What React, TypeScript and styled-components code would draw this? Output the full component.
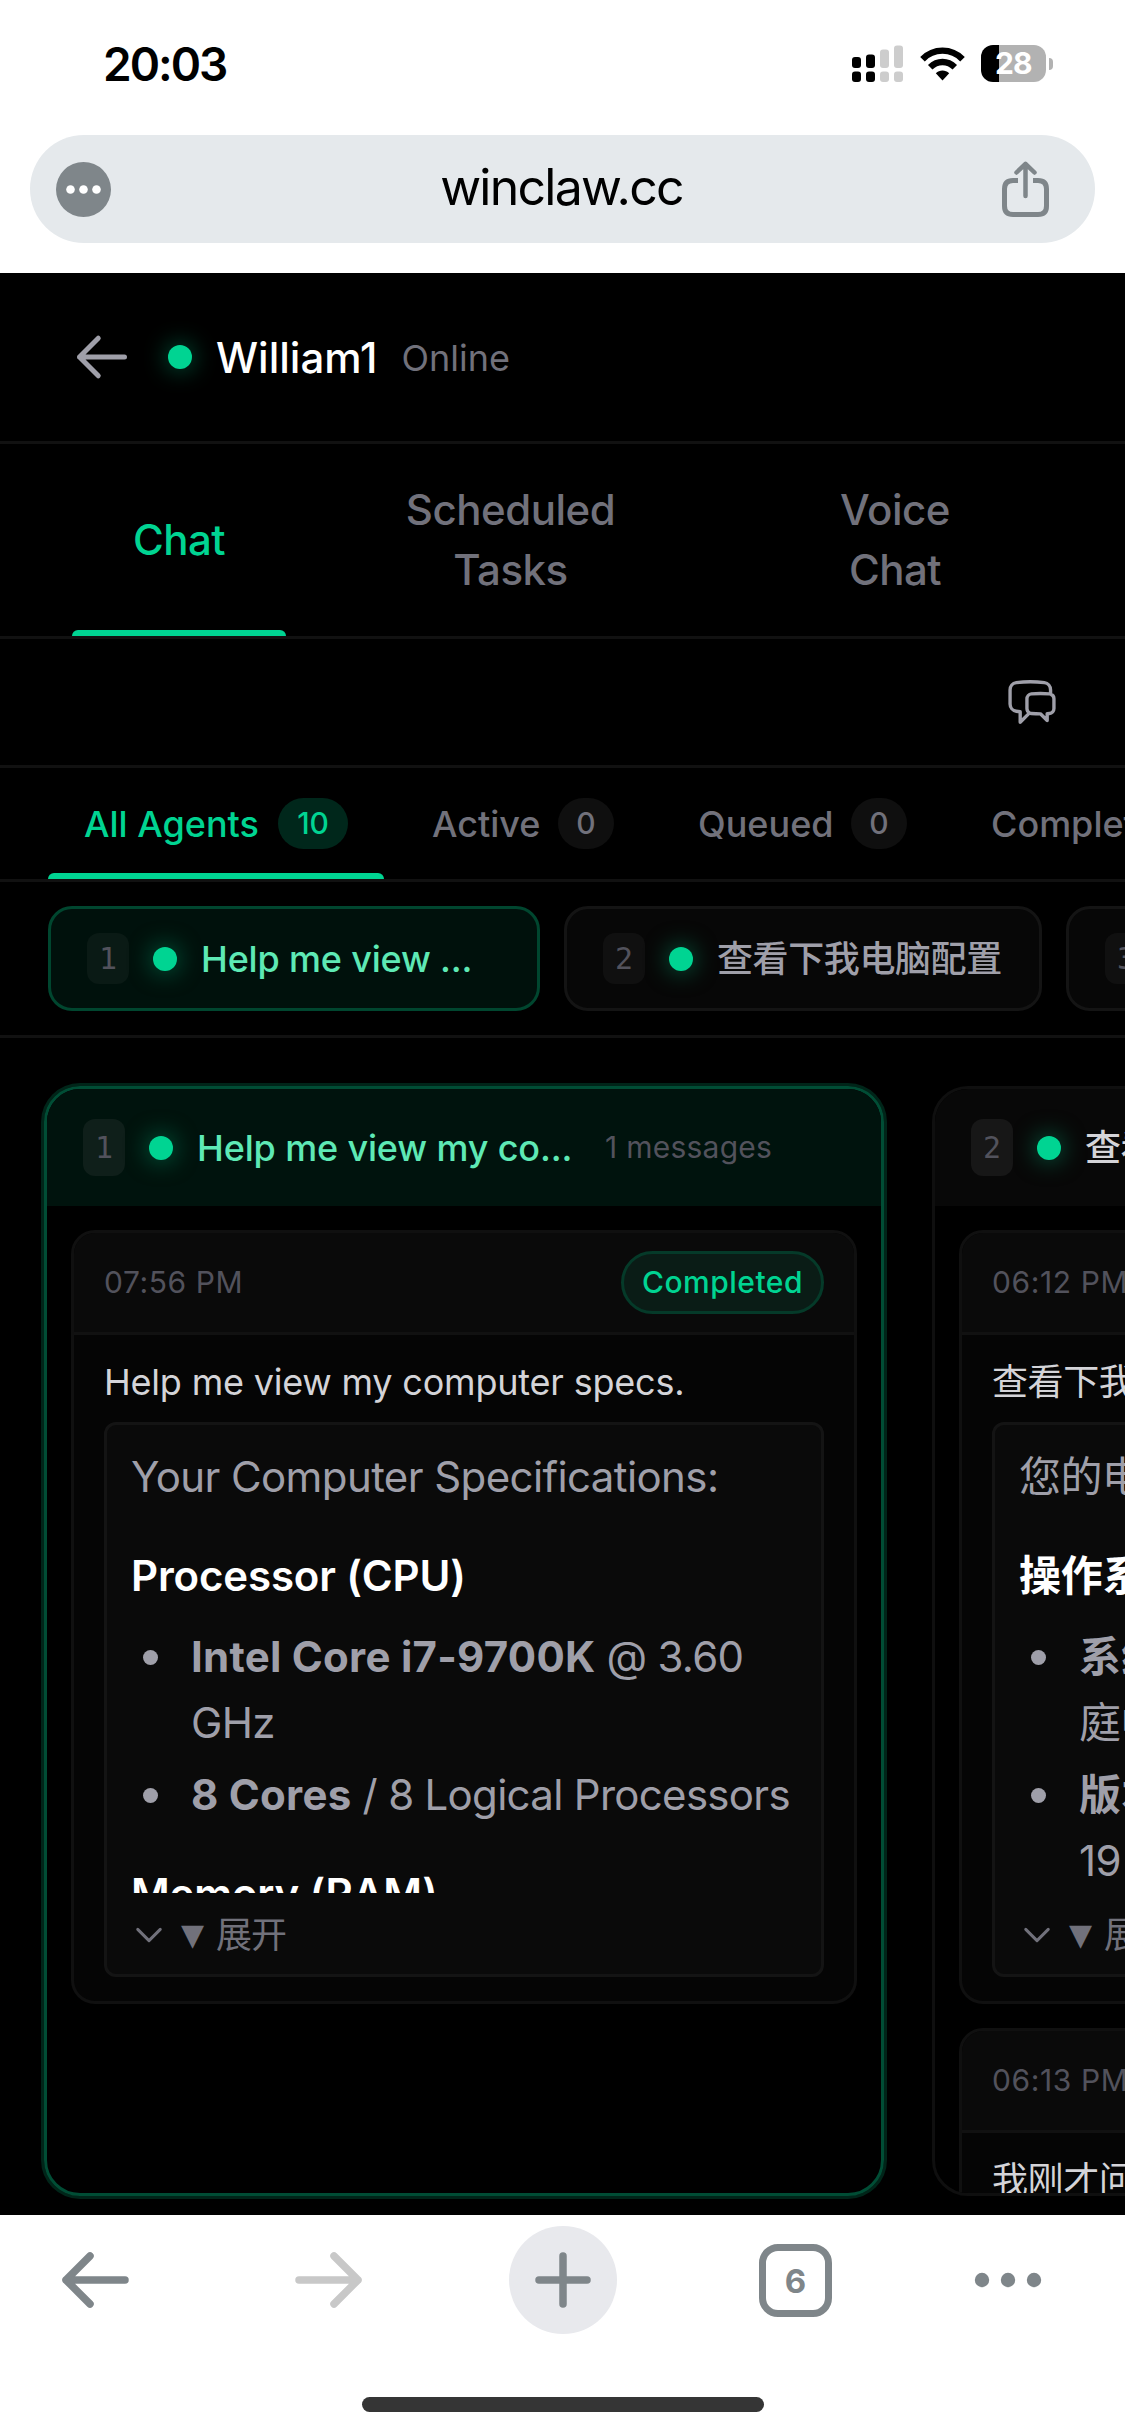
import React from 'react';
import styled, { createGlobalStyle, css } from 'styled-components';

const c = {
  green: '#00d492',
  mint: '#5ee9b5',
  muted: '#71717b',
  dim: '#52525c',
  soft: '#9f9fa9',
  text: '#d4d4d8',
  line: '#111111',
  chrome: '#7f868a',
};

const GlobalStyle = createGlobalStyle`
  *, *::before, *::after { box-sizing: border-box; }
  body {
    margin: 0;
    background: #fff;
    font-family: Inter, "Noto Sans CJK SC", sans-serif;
    -webkit-font-smoothing: antialiased;
  }
  svg { display: block; flex: none; }
`;

const Phone = styled.div`
  width: 1125px;
  height: 2436px;
  display: flex;
  flex-direction: column;
  overflow: hidden;
  background: #fff;
`;

/* ---------- status bar and address bar ---------- */

const StatusBar = styled.div`
  height: 135px;
  padding: 0 72px 8px 103px;
  display: flex;
  align-items: center;
  justify-content: space-between;
`;

const Clock = styled.div`
  font-size: 46px;
  font-weight: 600;
  line-height: 56px;
  letter-spacing: -2px;
  color: #000;
`;

const StatusIcons = styled.div`
  display: flex;
  align-items: center;
  width: 201px;
`;

const WifiSlot = styled.div`
  margin: 0 16px 0 17px;
`;

const Battery = styled.div`
  width: 66px;
  height: 37px;
  border-radius: 12px;
  background: linear-gradient(90deg, #000 18.5px, #b2b2b2 18.5px);
  color: #fff;
  font-size: 30px;
  font-weight: 700;
  line-height: 37px;
  letter-spacing: -0.8px;
  padding-left: 14px;
`;

const BatteryTip = styled.div`
  width: 4px;
  height: 12px;
  margin-left: 3px;
  border-radius: 0 4px 4px 0;
  background: #b2b2b2;
`;

const AddressArea = styled.div`
  height: 138px;
  padding: 0 30px;
`;

const AddressBar = styled.div`
  height: 108px;
  border-radius: 54px;
  background: #e5e9ec;
  display: flex;
  align-items: center;
  justify-content: space-between;
  padding: 0 45px 0 26px;
`;

const Url = styled.div`
  font-size: 50px;
  line-height: 60px;
  letter-spacing: -1.75px;
  padding: 0 0 5px 11px;
  color: #000;
`;

/* ---------- page ---------- */

const Page = styled.main`
  height: 1942px;
  background: #000;
  display: flex;
  flex-direction: column;
  overflow: hidden;
`;

const PageHeader = styled.header`
  height: 171px;
  flex: none;
  padding: 0 72px;
  display: flex;
  align-items: center;
  border-bottom: 3px solid ${c.line};
`;

const StatusDot = styled.span`
  width: 24px;
  height: 24px;
  flex: none;
  border-radius: 50%;
  background: ${c.green};
  box-shadow: 0 0 24px rgba(0, 212, 146, 0.5);
`;

const UserName = styled.h1`
  margin: 0 24px;
  padding-top: 1px;
  font-size: 42px;
  font-weight: 500;
  line-height: 60px;
  color: #fff;
`;

const Presence = styled.span`
  padding-top: 2px;
  font-size: 36px;
  line-height: 48px;
  color: ${c.muted};
`;

const HeaderDot = styled(StatusDot)`
  margin-left: 36px;
`;

const Tabs = styled.nav`
  height: 195px;
  flex: none;
  display: flex;
  padding-left: 72px;
  border-bottom: 3px solid ${c.line};
`;

const underline = css`
  &::after {
    content: '';
    position: absolute;
    left: 0;
    right: 0;
    bottom: 0;
    height: 6px;
    border-radius: 6px 6px 0 0;
    background: ${c.green};
  }
`;

const Tab = styled.button<{ $width: number; $active?: boolean }>`
  position: relative;
  width: ${p => p.$width}px;
  border: 0;
  padding: 0 60px;
  background: none;
  font: 500 42px/60px Inter, "Noto Sans CJK SC", sans-serif;
  letter-spacing: -0.5px;
  text-align: center;
  color: ${p => (p.$active ? c.green : c.muted)};
  ${p => p.$active && underline}
`;

const Toolbar = styled.div`
  height: 129px;
  flex: none;
  display: flex;
  align-items: center;
  justify-content: flex-end;
  padding-right: 66px;
  border-bottom: 3px solid ${c.line};
`;

const FilterBar = styled.nav`
  height: 114px;
  flex: none;
  display: flex;
  gap: 12px;
  padding-left: 48px;
  border-bottom: 3px solid ${c.line};
`;

const Filter = styled.button<{ $width: number; $active?: boolean }>`
  position: relative;
  flex: none;
  width: ${p => p.$width}px;
  display: flex;
  align-items: center;
  justify-content: space-between;
  border: 0;
  padding: 0 36px;
  background: none;
  font: 500 36px/48px Inter, "Noto Sans CJK SC", sans-serif;
  color: ${p => (p.$active ? c.green : c.muted)};
  ${p => p.$active && underline}
`;

const CountBadge = styled.span<{ $active?: boolean }>`
  min-width: 56px;
  height: 51px;
  padding: 0 ${p => (p.$active ? 19 : 18)}px;
  border-radius: 26px;
  display: flex;
  align-items: center;
  justify-content: center;
  font-size: 30px;
  line-height: 45px;
  background: ${p => (p.$active ? '#00271b' : '#0f0f0f')};
`;

const ChipBar = styled.div`
  height: 156px;
  flex: none;
  display: flex;
  align-items: center;
  gap: 24px;
  padding-left: 48px;
  border-bottom: 3px solid ${c.line};
`;

const Chip = styled.div<{ $width: number; $active?: boolean }>`
  flex: none;
  width: ${p => p.$width}px;
  height: 105px;
  padding-left: 36px;
  display: flex;
  align-items: center;
  gap: 24px;
  border: 3px solid ${p => (p.$active ? '#00462f' : '#141414')};
  border-radius: 24px;
  background: ${p => (p.$active ? '#00110c' : '#070707')};
  font-size: 36px;
  font-weight: 500;
  line-height: 54px;
  letter-spacing: -0.18px;
  white-space: nowrap;
  color: ${p => (p.$active ? c.mint : c.soft)};
`;

const Han = styled.span`
  letter-spacing: -0.4px;
`;

const Index = styled.span<{ $tall?: boolean; $tint: string }>`
  width: 42px;
  height: ${p => (p.$tall ? 57 : 51)}px;
  flex: none;
  border-radius: 12px;
  display: flex;
  align-items: center;
  justify-content: center;
  background: ${p => p.$tint};
  font: 400 30px/45px "DejaVu Sans Mono", monospace;
  color: ${c.dim};
`;

const Board = styled.section`
  flex: 1;
  min-height: 0;
  display: flex;
  gap: 48px;
  padding: 48px 0 19px 44px;
`;

const Column = styled.article<{ $active?: boolean }>`
  width: 840px;
  flex: none;
  display: flex;
  flex-direction: column;
  overflow: hidden;
  border: 3px solid ${p => (p.$active ? '#004d35' : '#0f0f0f')};
  border-radius: 36px;
  box-shadow: ${p => (p.$active ? '0 0 0 3px #002519' : 'none')};
`;

const ColumnHeader = styled.header<{ $active?: boolean }>`
  height: 117px;
  flex: none;
  padding-left: 36px;
  display: flex;
  align-items: center;
  gap: 24px;
  background: ${p => (p.$active ? '#00130d' : '#080808')};
`;

const ColumnTitle = styled.h2<{ $active?: boolean }>`
  margin: 0;
  width: 384px;
  font-size: 36px;
  font-weight: 500;
  line-height: 54px;
  letter-spacing: -0.15px;
  white-space: nowrap;
  color: ${p => (p.$active ? c.mint : c.text)};
`;

const MessageCount = styled.span`
  font-size: 30px;
  line-height: 45px;
  letter-spacing: 0.25px;
  color: ${c.dim};
`;

const ColumnBody = styled.div`
  padding: 24px;
  display: flex;
  flex-direction: column;
  gap: 24px;
`;

const Message = styled.section`
  flex: none;
  border: 3px solid #101010;
  border-radius: 24px;
  overflow: hidden;
  background: #050505;
`;

const MessageHeader = styled.header`
  height: 102px;
  padding: 0 30px;
  display: flex;
  align-items: center;
  justify-content: space-between;
  background: #0a0a0a;
  border-bottom: 3px solid #111;
`;

const Time = styled.time`
  font-size: 30px;
  line-height: 45px;
  letter-spacing: 0.6px;
  color: ${c.dim};
`;

const DonePill = styled.span`
  height: 63px;
  width: 203px;
  border: 3px solid #053a29;
  border-radius: 32px;
  background: #0a1c16;
  font-size: 30px;
  font-weight: 500;
  line-height: 57px;
  letter-spacing: 0.5px;
  text-align: center;
  color: ${c.green};
`;

const MessageBody = styled.div`
  padding: 24px 30px;
`;

const Query = styled.p`
  margin: 0 0 17px;
  padding-top: 1px;
  font-size: 36px;
  line-height: 45px;
  letter-spacing: -0.2px;
  white-space: nowrap;
  color: ${c.text};
`;

const Answer = styled.div`
  height: 555px;
  border: 3px solid #141414;
  border-radius: 12px;
  background: #0a0a0a;
  padding: 18px 24px 0;
`;

const Clip = styled.div`
  height: 450px;
  padding-top: 1px;
  overflow: hidden;
  font-size: 42px;
  line-height: 66px;
  letter-spacing: -0.7px;
  white-space: nowrap;
  color: ${c.soft};
`;

const Lead = styled.p`
  margin: 0;
  letter-spacing: -0.6px;
`;

const Section = styled.h3`
  margin: 33px 0 15px;
  font-size: 42px;
  font-weight: 600;
  letter-spacing: -0.15px;
  color: #fff;
`;

const Specs = styled.ul`
  margin: 0;
  padding: 0;
  list-style: none;
  display: flex;
  flex-direction: column;
  gap: 6px;
`;

const Spec = styled.li`
  display: flex;
  gap: 33px;
  padding-left: 12px;

  &::before {
    content: '';
    width: 15px;
    height: 15px;
    flex: none;
    margin-top: 26px;
    border-radius: 50%;
    background: ${c.soft};
  }
`;

const Strong = styled.strong`
  font-weight: 700;
  letter-spacing: 0.25px;
`;

const Expand = styled.button`
  margin-top: 18px;
  height: 48px;
  border: 0;
  padding: 0;
  background: none;
  display: flex;
  align-items: center;
  font: 400 36px/48px Inter, "Noto Sans CJK SC", sans-serif;
  letter-spacing: -0.9px;
  color: ${c.muted};
`;

const Triangle = styled.span`
  width: 35px;
  margin-left: 14px;
  text-align: left;
  font: 30px/48px "DejaVu Sans", sans-serif;
`;

/* ---------- browser toolbar ---------- */

const BrowserBar = styled.footer`
  flex: 1;
  display: flex;
  flex-direction: column;
  align-items: center;
  justify-content: space-between;
  padding: 11px 0 24px;
`;

const BrowserActions = styled.div`
  width: 1125px;
  height: 108px;
  display: grid;
  grid-template-columns: 191px 275px 194px 271px 153px;
  align-items: center;
  justify-items: center;
`;

const NewTab = styled.div`
  width: 108px;
  height: 108px;
  border-radius: 50%;
  background: #e8e9ed;
  display: grid;
  place-items: center;
`;

const TabCount = styled.div`
  width: 73px;
  height: 73px;
  border: 7px solid ${c.chrome};
  border-radius: 19px;
  font-size: 33px;
  font-weight: 700;
  line-height: 61px;
  text-align: center;
  color: ${c.chrome};
`;

const HomeIndicator = styled.div`
  width: 402px;
  height: 15px;
  border-radius: 8px;
  background: #353535;
`;

/* ---------- icons ---------- */

const SignalIcon = () => (
  <svg width="51" height="37" viewBox="0 0 51 37">
    <g fill="#000">
      <rect x="0" y="12" width="9" height="11" rx="3" />
      <rect x="14" y="9.500" width="9" height="13.500" rx="3" />
      <rect x="0" y="26.500" width="9" height="10.500" rx="3" />
      <rect x="14" y="26.500" width="9" height="10.500" rx="3" />
    </g>
    <g fill="#cdcdcd">
      <rect x="28" y="4.500" width="9" height="18.500" rx="3" />
      <rect x="42" y="0.500" width="9" height="22.500" rx="3" />
      <rect x="28" y="26.500" width="9" height="10.500" rx="3" />
      <rect x="42" y="26.500" width="9" height="10.500" rx="3" />
    </g>
  </svg>
);

const WifiIcon = () => (
  <svg width="45" height="34" viewBox="0 0 45 34">
    <g fill="none" stroke="#000" strokeWidth="6.400">
      <path d="M2.500 12.200C13.500 0.800 31.500 0.800 42.500 12.200" />
      <path d="M10.200 20.200C17.300 13.300 27.700 13.300 34.800 20.200" />
    </g>
    <path d="M22.500 33.500L15.800 26.200C19.600 22.600 25.400 22.600 29.200 26.200Z" fill="#000" />
  </svg>
);

const PageMenuIcon = () => (
  <svg width="55" height="55" viewBox="0 0 55 55">
    <circle cx="27.500" cy="27.500" r="27.500" fill={c.chrome} />
    <g fill="#fff">
      <circle cx="14.500" cy="27.500" r="4.300" />
      <circle cx="27.500" cy="27.500" r="4.300" />
      <circle cx="40.500" cy="27.500" r="4.300" />
    </g>
  </svg>
);

const ShareIcon = () => (
  <svg width="49" height="58" viewBox="0 0 49 58" fill="none" stroke={c.chrome} strokeWidth="5">
    <path d="M17 20.500H12Q3.500 20.500 3.500 29V46Q3.500 54.500 12 54.500H37Q45.500 54.500 45.500 46V29Q45.500 20.500 37 20.500H32" />
    <path d="M24.500 36V4M15.500 12.500L24.500 3.800L33.500 12.500" strokeWidth="4.500" strokeLinecap="round" strokeLinejoin="round" />
  </svg>
);

const BackIcon = () => (
  <svg width="60" height="60" viewBox="0 0 24 24" fill="none" stroke={c.soft} strokeWidth="2" strokeLinecap="round" strokeLinejoin="round">
    <path d="M10.500 19.500L3 12M3 12l7.500-7.500M3 12h18" />
  </svg>
);

const BubblesIcon = () => (
  <svg width="54" height="54" viewBox="0 0 24 24" fill="none" stroke={c.soft} strokeWidth="1.500" strokeLinecap="round" strokeLinejoin="round">
    <path d="M20.250 8.511c.884.284 1.500 1.128 1.500 2.097v4.286c0 1.136-.847 2.100-1.980 2.193-.340.027-.680.052-1.020.072v3.091l-3-3c-1.354 0-2.694-.055-4.020-.163a2.115 2.115 0 0 1-.825-.242m9.345-8.334a2.126 2.126 0 0 0-.476-.095 48.640 48.640 0 0 0-8.048 0c-1.131.094-1.976 1.057-1.976 2.192v4.286c0 .837.460 1.580 1.155 1.951m9.345-8.334V6.637c0-1.621-1.152-3.026-2.760-3.235A48.455 48.455 0 0 0 11.250 3c-2.115 0-4.198.137-6.240.402-1.608.209-2.760 1.614-2.760 3.235v6.226c0 1.621 1.152 3.026 2.760 3.235.577.075 1.157.140 1.740.194V21l4.155-4.155" />
  </svg>
);

const ChevronIcon = () => (
  <svg width="36" height="36" viewBox="0 0 24 24" fill="none" stroke={c.muted} strokeWidth="2" strokeLinecap="round" strokeLinejoin="round">
    <path d="m19.500 8.250-7.500 7.500-7.500-7.500" />
  </svg>
);

const ArrowIcon = ({ forward }: { forward?: boolean }) => (
  <svg width="67" height="56" viewBox="0 0 67 56" fill="none" stroke={forward ? '#c8c8c8' : c.chrome} strokeWidth="7.500" strokeLinecap="round" strokeLinejoin="round">
    <path d={forward ? 'M4 28H63M39 4L63 28L39 52' : 'M63 28H4M28 4L4 28L28 52'} />
  </svg>
);

const PlusIcon = () => (
  <svg width="56" height="56" viewBox="0 0 56 56" stroke={c.chrome} strokeWidth="7.500" strokeLinecap="round">
    <path d="M28 4V52M4 28H52" />
  </svg>
);

const MoreIcon = () => (
  <svg width="68" height="16" viewBox="0 0 68 16" fill={c.chrome}>
    <circle cx="8" cy="8" r="7.200" />
    <circle cx="34" cy="8" r="7.200" />
    <circle cx="60" cy="8" r="7.200" />
  </svg>
);

/* ---------- parts ---------- */

const ExpandToggle = () => (
  <Expand>
    <ChevronIcon />
    <Triangle>▼</Triangle>
    <span>展开</span>
  </Expand>
);

const MessageTop = ({ time }: { time: string }) => (
  <MessageHeader>
    <Time>{time}</Time>
    <DonePill>Completed</DonePill>
  </MessageHeader>
);

const filters = [
  { label: 'All Agents', count: 10, width: 336, active: true },
  { label: 'Active', count: 0, width: 254 },
  { label: 'Queued', count: 0, width: 281 },
  { label: 'Completed', count: 10, width: 345 },
];

export default function App() {
  return (
    <Phone>
      <GlobalStyle />
      <StatusBar>
        <Clock>20:03</Clock>
        <StatusIcons>
          <SignalIcon />
          <WifiSlot><WifiIcon /></WifiSlot>
          <Battery>28</Battery>
          <BatteryTip />
        </StatusIcons>
      </StatusBar>
      <AddressArea>
        <AddressBar>
          <PageMenuIcon />
          <Url>winclaw.cc</Url>
          <ShareIcon />
        </AddressBar>
      </AddressArea>

      <Page>
        <PageHeader>
          <BackIcon />
          <HeaderDot />
          <UserName>William1</UserName>
          <Presence>Online</Presence>
        </PageHeader>

        <Tabs>
          <Tab $width={214} $active>Chat</Tab>
          <Tab $width={449}>Scheduled<br />Tasks</Tab>
          <Tab $width={320}>Voice<br />Chat</Tab>
        </Tabs>

        <Toolbar><BubblesIcon /></Toolbar>

        <FilterBar>
          {filters.map(f => (
            <Filter key={f.label} $width={f.width} $active={f.active}>
              {f.label}
              <CountBadge $active={f.active}>{f.count}</CountBadge>
            </Filter>
          ))}
        </FilterBar>

        <ChipBar>
          <Chip $width={492} $active>
            <Index $tint="#0a1a15">1</Index>
            <StatusDot />
            <span>Help me view ...</span>
          </Chip>
          <Chip $width={478}>
            <Index $tint="#101010">2</Index>
            <StatusDot />
            <Han>查看下我电脑配置</Han>
          </Chip>
          <Chip $width={478}>
            <Index $tint="#101010">3</Index>
          </Chip>
        </ChipBar>

        <Board>
          <Column $active>
            <ColumnHeader $active>
              <Index $tall $tint="#0f1f1a">1</Index>
              <StatusDot />
              <ColumnTitle $active>Help me view my co...</ColumnTitle>
              <MessageCount>1 messages</MessageCount>
            </ColumnHeader>
            <ColumnBody>
              <Message>
                <MessageTop time="07:56 PM" />
                <MessageBody>
                  <Query>Help me view my computer specs.</Query>
                  <Answer>
                    <Clip>
                      <Lead>Your Computer Specifications:</Lead>
                      <Section>Processor (CPU)</Section>
                      <Specs>
                        <Spec><span><Strong>Intel Core i7-9700K</Strong> @ 3.60<br />GHz</span></Spec>
                        <Spec><span><Strong>8 Cores</Strong> / 8 Logical Processors</span></Spec>
                      </Specs>
                      <Section>Memory (RAM)</Section>
                    </Clip>
                    <ExpandToggle />
                  </Answer>
                </MessageBody>
              </Message>
            </ColumnBody>
          </Column>

          <Column>
            <ColumnHeader>
              <Index $tall $tint="#171717">2</Index>
              <StatusDot />
              <ColumnTitle><Han>查看</Han></ColumnTitle>
            </ColumnHeader>
            <ColumnBody>
              <Message>
                <MessageTop time="06:12 PM" />
                <MessageBody>
                  <Query><Han>查看下我</Han></Query>
                  <Answer>
                    <Clip>
                      <Lead>您的电</Lead>
                      <Section>操作系</Section>
                      <Specs>
                        <Spec><span><Strong>系统</Strong><br />庭中</span></Spec>
                        <Spec><span><Strong>版本</Strong><br />19</span></Spec>
                      </Specs>
                    </Clip>
                    <ExpandToggle />
                  </Answer>
                </MessageBody>
              </Message>
              <Message>
                <MessageTop time="06:13 PM" />
                <MessageBody>
                  <Query><Han>我刚才问</Han></Query>
                </MessageBody>
              </Message>
            </ColumnBody>
          </Column>
        </Board>
      </Page>

      <BrowserBar>
        <BrowserActions>
          <ArrowIcon />
          <ArrowIcon forward />
          <NewTab><PlusIcon /></NewTab>
          <TabCount>6</TabCount>
          <MoreIcon />
        </BrowserActions>
        <HomeIndicator />
      </BrowserBar>
    </Phone>
  );
}
